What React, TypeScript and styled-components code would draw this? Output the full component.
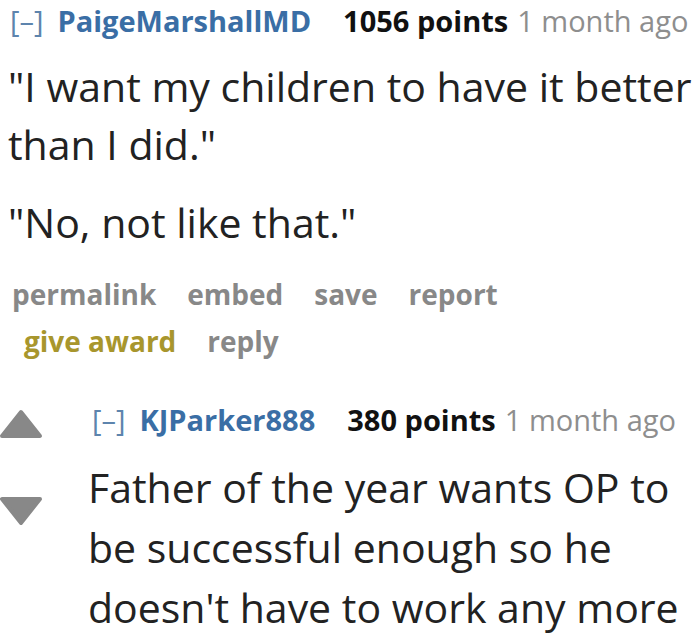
import styled, { createGlobalStyle } from "styled-components";

const GlobalStyle = createGlobalStyle`
  body {
    margin: 0;
    background: #fff;
    font-family: "Open Sans", "Noto Sans", sans-serif;
  }
`;

const Page = styled.div`
  width: 700px;
  height: 641px;
  overflow: hidden;
`;

const Comment = styled.div`
  padding-left: 8px;
`;

const Tagline = styled.div<{ $indent?: number }>`
  display: flex;
  align-items: baseline;
  padding-top: 1px;
  padding-left: ${({ $indent }) => $indent ?? 2}px;
  font-size: 29px;
  line-height: 40px;
  white-space: nowrap;
`;

const Expand = styled.span`
  font-weight: 400;
  color: #5d84ad;
  margin-right: 14px;
`;

const Author = styled.span`
  font-weight: 700;
  color: #3a6ea5;
  margin-right: 32px;
`;

const Score = styled.span`
  font-weight: 700;
  color: #111;
  margin-right: 9px;
`;

const Time = styled.span`
  color: #8e8e8e;
`;

const Body = styled.div<{ $lh: number; $top: number }>`
  margin-top: ${({ $top }) => $top}px;
  font-size: 41px;
  line-height: ${({ $lh }) => $lh}px;
  color: #222;

  p {
    margin: 0 0 20px;
  }
  p:last-child {
    margin-bottom: 0;
  }
`;

const Buttons = styled.ul`
  list-style: none;
  margin: 23px 0 0;
  padding: 0 0 0 4px;
  width: 530px;
  display: flex;
  flex-wrap: wrap;
  column-gap: 31px;
  row-gap: 7px;
  font-size: 28px;
  line-height: 40px;
  font-weight: 700;
`;

const Button = styled.li<{ $gold?: boolean }>`
  color: ${({ $gold }) => ($gold ? "#a8962d" : "#888")};
  margin-left: ${({ $gold }) => ($gold ? 12 : 0)}px;
`;

const Child = styled.div`
  display: flex;
  margin-top: 38px;
`;

const Votes = styled.div`
  width: 44px;
  flex: none;
  display: flex;
  flex-direction: column;
  gap: 57px;
  padding-top: 10px;
  margin-left: -1px;
`;

const Entry = styled.div`
  margin-left: 45px;
`;

const Arrow = ({ down }: { down?: boolean }) => (
  <svg width="44" height="30" viewBox="0 0 44 30" style={{ display: "block" }}>
    <polygon
      points={down ? "3,3 41,3 22,27" : "3,27 22,3 41,27"}
      fill="#888"
      stroke="#888"
      strokeWidth="4"
      strokeLinejoin="round"
    />
  </svg>
);

const buttons = ["permalink", "embed", "save", "report"];

export default function App() {
  return (
    <Page>
      <GlobalStyle />
      <Comment>
        <Tagline>
          <Expand>[–]</Expand>
          <Author>PaigeMarshallMD</Author>
          <Score>1056 points</Score>
          <Time>1 month ago</Time>
        </Tagline>
        <Body $lh={58} $top={16}>
          <p>"I want my children to have it better than I did."</p>
          <p>"No, not like that."</p>
        </Body>
        <Buttons>
          {buttons.map((b) => (
            <Button key={b}>{b}</Button>
          ))}
          <Button $gold>give award</Button>
          <Button>reply</Button>
        </Buttons>
      </Comment>
      <Child>
        <Votes>
          <Arrow />
          <Arrow down />
        </Votes>
        <Entry>
          <Tagline $indent={4}>
            <Expand>[–]</Expand>
            <Author>KJParker888</Author>
            <Score>380 points</Score>
            <Time>1 month ago</Time>
          </Tagline>
          <Body $lh={60} $top={17}>
            <p>Father of the year wants OP to be successful enough so he doesn't have to work any more</p>
          </Body>
        </Entry>
      </Child>
    </Page>
  );
}
